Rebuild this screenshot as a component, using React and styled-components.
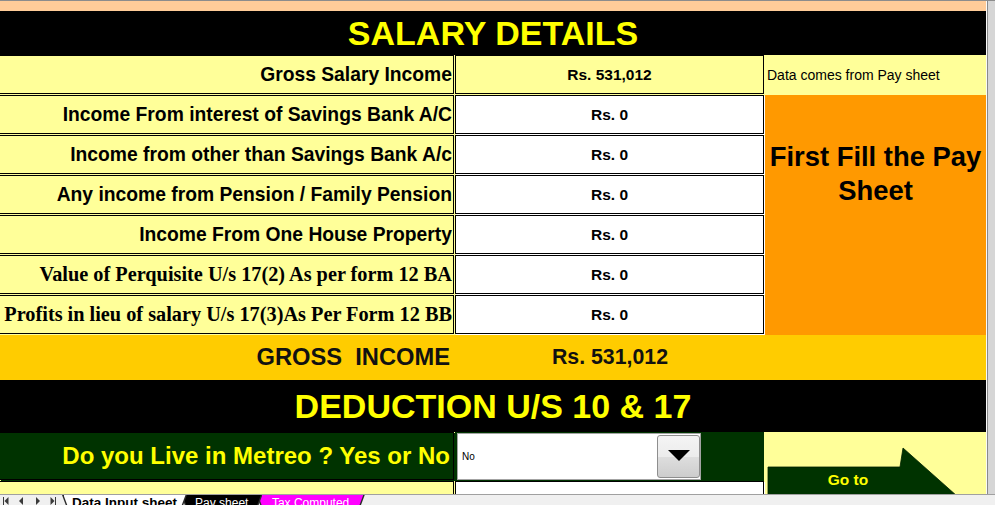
import React from 'react'
import styled, { createGlobalStyle } from 'styled-components'

const paper = '#ffff99'
const orange = '#ff9900'
const gold = '#ffcc00'
const green = '#003300'
const yellow = '#ffff00'

const GlobalStyle = createGlobalStyle`
  html, body {
    margin: 0;
    padding: 0;
    background: #f0f0f0;
  }
  body {
    font-family: "Liberation Sans", Arial, sans-serif;
    overflow: hidden;
  }
`

const Window = styled.div`
  width: 995px;
  height: 505px;
  box-sizing: border-box;
  border-top: 1px solid #8c8c8c;
  display: flex;
  flex-direction: column;
  overflow: hidden;
`

const Workspace = styled.div`
  display: flex;
  height: 493px;
`

const SheetArea = styled.div`
  width: 986px;
  display: flex;
  flex-direction: column;
`

const ColumnStrip = styled.div`
  height: 10px;
  background: #ffcc99;
`

const ScrollEdge = styled.div`
  flex: 1;
  border-left: 1px solid #fafafa;
  box-shadow: inset 1px 0 0 #8a8a8a;
  background: #d6d6d6;
`

const Grid = styled.div`
  display: grid;
  grid-template-columns: 455px 310px 221px;
  grid-template-rows: 44px repeat(7, 40px) 45px 52px 49px 13px;
  background: ${paper};
`

const Banner = styled.div`
  grid-column: 1 / -1;
  background: #000;
  color: ${yellow};
  font-weight: bold;
  font-size: 34px;
  display: flex;
  align-items: center;
  justify-content: center;
  white-space: nowrap;
`

const Cell = styled.div`
  box-sizing: border-box;
  margin: 0 1px ${p => (p.$cut ? 0 : 1)}px 0;
  border: 1px solid #000;
  border-bottom-width: ${p => (p.$cut ? 0 : 1)}px;
  background: ${p => p.$bg || '#fff'};
  box-shadow: 1px 1px 0 ${p => p.$bg || '#fff'};
  display: flex;
  align-items: center;
  min-width: 0;
  overflow: hidden;
  white-space: nowrap;
`

const Label = styled(Cell)`
  border-left: none;
  justify-content: flex-end;
  padding-right: 1px;
  font-weight: bold;
  color: #000;
  font-family: ${p => (p.$serif ? '"Liberation Serif", "Times New Roman", serif' : 'inherit')};
  font-size: ${p => (p.$serif ? '20.3px' : '19.3px')};
`

const Amount = styled(Cell)`
  justify-content: center;
  font-weight: bold;
  font-size: 15.5px;
  color: #000;
`

const Note = styled.div`
  display: flex;
  align-items: center;
  padding-left: 2px;
  font-size: 14px;
  color: #000;
  white-space: nowrap;
`

const Warning = styled.div`
  grid-row: span 6;
  background: ${orange};
  padding-top: 45px;
  text-align: center;
  font-weight: bold;
  font-size: 27.4px;
  line-height: 34px;
  color: #000;
  white-space: nowrap;
`

const Band = styled.div`
  background: ${gold};
  display: flex;
  align-items: center;
  justify-content: ${p => p.$align || 'center'};
  padding-right: ${p => (p.$align ? 5 : 0)}px;
  font-weight: bold;
  font-size: ${p => p.$size || 21.3}px;
  white-space: pre;
  color: #111;
`

const Question = styled(Cell)`
  border-left: none;
  justify-content: flex-end;
  padding-right: 3px;
  font-weight: bold;
  font-size: 24px;
  color: ${yellow};
`

const ChoiceCell = styled.div`
  margin-right: 1px;
  background: ${green};
  padding: 1px 0 1px 2px;
  display: flex;
`

const Select = styled.div`
  width: 244px;
  box-sizing: border-box;
  background: #fff;
  border: 1px solid #a3a3a3;
  display: flex;
  align-items: center;
`

const SelectValue = styled.span`
  flex: 1;
  padding-left: 4px;
  font-size: 10px;
  color: #000;
`

const DropButton = styled.div`
  align-self: stretch;
  width: 43px;
  box-sizing: border-box;
  margin: 1px 0;
  border: 1px solid #8e8e8e;
  border-radius: 3px;
  background: linear-gradient(#f4f4f4 0%, #ececec 50%, #dedede 51%, #cdcdcd 100%);
  display: flex;
  align-items: center;
  justify-content: center;

  &::after {
    content: '';
    margin-top: -2px;
    border-left: 11px solid transparent;
    border-right: 11px solid transparent;
    border-top: 11px solid #000;
  }
`

const ArrowCell = styled.div`
  grid-row: span 2;
  overflow: hidden;
  background: ${paper};

  svg {
    display: block;
  }
`

const TabBar = styled.div`
  height: 11px;
  box-sizing: border-box;
  border-top: 1px solid #a0a0a0;
  background: #f0f0f0;
  display: flex;
  align-items: flex-start;
  overflow: hidden;
`

const Nav = styled.div`
  width: 62px;
  flex: none;

  svg {
    display: block;
  }
`

const tabShape = 'polygon(0 0, 100% 0, calc(100% - 6px) 100%, 6px 100%)'

const Tab = styled.div`
  position: relative;
  flex: none;
  height: 16px;
  margin-left: ${p => (p.$first ? 0 : -6)}px;
  padding: 0 ${p => p.$pad}px;
  background: #2a2a2a;
  clip-path: ${tabShape};
  z-index: ${p => p.$layer};
  font-size: ${p => (p.$active ? 13.5 : 12)}px;
  font-weight: ${p => (p.$active ? 'bold' : 'normal')};
  line-height: 16px;
  color: ${p => p.$ink};
  white-space: nowrap;

  &::before {
    content: '';
    position: absolute;
    top: 0;
    bottom: 0;
    left: 1.5px;
    right: 1.5px;
    background: ${p => p.$bg};
    clip-path: ${tabShape};
  }

  span {
    position: relative;
  }
`

const incomeRows = [
  { label: 'Gross Salary Income', value: 'Rs. 531,012', bg: paper },
  { label: 'Income From interest of Savings Bank A/C', value: 'Rs. 0' },
  { label: 'Income from other than Savings Bank A/c', value: 'Rs. 0' },
  { label: 'Any income from Pension / Family Pension', value: 'Rs. 0' },
  { label: 'Income From One House Property', value: 'Rs. 0' },
  { label: 'Value of Perquisite U/s 17(2) As per form 12 BA', value: 'Rs. 0', serif: true },
  { label: 'Profits in lieu of salary U/s 17(3)As Per Form 12 BB', value: 'Rs. 0', serif: true },
]

const sheets = [
  { name: 'Data Input sheet', bg: '#fff', ink: '#000', pad: 10, active: true },
  { name: 'Pay sheet', bg: '#000', ink: '#fff', pad: 14 },
  { name: 'Tax Computed', bg: '#ff00ff', ink: '#fff', pad: 15.5 },
]

const NavArrows = () => (
  <svg width="62" height="10" viewBox="0 0 62 10">
    <g fill="#3a3a3a">
      <rect x="3" y="2" width="1" height="8" />
      <polygon points="8.5,2 4.5,6 8.5,10" />
      <polygon points="23,2 19,6 23,10" />
      <polygon points="36,2 40,6 36,10" />
      <polygon points="50.5,2 54.5,6 50.5,10" />
      <rect x="55" y="2" width="1" height="8" />
    </g>
  </svg>
)

const GoToArrow = () => (
  <svg width="221" height="62" viewBox="0 0 221 62">
    <polygon points="3,35 135,35 138,16 210,80 3,80" fill={green} stroke="#002200" strokeWidth="0.8" />
    <text
      x="83"
      y="52.5"
      textAnchor="middle"
      fill={yellow}
      fontFamily='"Liberation Sans", Arial, sans-serif'
      fontWeight="bold"
      fontSize="15.5"
    >
      Go to
    </text>
  </svg>
)

export default function App() {
  return (
    <Window>
      <GlobalStyle />
      <Workspace>
        <SheetArea>
          <ColumnStrip />
          <Grid>
            <Banner>SALARY DETAILS</Banner>

            {incomeRows.map((row, i) => (
              <React.Fragment key={row.label}>
                <Label $bg={paper} $serif={row.serif}>{row.label}</Label>
                <Amount $bg={row.bg}>{row.value}</Amount>
                {i === 0 && <Note>Data comes from Pay sheet</Note>}
                {i === 1 && (
                  <Warning>
                    First Fill the Pay
                    <br />
                    Sheet
                  </Warning>
                )}
              </React.Fragment>
            ))}

            <Band $align="flex-end" $size={23.7}>GROSS  INCOME</Band>
            <Band>Rs. 531,012</Band>
            <Band />

            <Banner>DEDUCTION U/S 10 &amp; 17</Banner>

            <Question $bg={green}>Do you Live in Metreo ? Yes or No</Question>
            <ChoiceCell>
              <Select>
                <SelectValue>No</SelectValue>
                <DropButton />
              </Select>
            </ChoiceCell>
            <ArrowCell>
              <GoToArrow />
            </ArrowCell>

            <Label $bg={paper} $cut />
            <Amount $cut />
          </Grid>
        </SheetArea>
        <ScrollEdge />
      </Workspace>
      <TabBar>
        <Nav>
          <NavArrows />
        </Nav>
        {sheets.map((s, i) => (
          <Tab
            key={s.name}
            $first={i === 0}
            $active={s.active}
            $bg={s.bg}
            $ink={s.ink}
            $pad={s.pad}
            $layer={sheets.length - i}
          >
            <span>{s.name}</span>
          </Tab>
        ))}
      </TabBar>
    </Window>
  )
}
